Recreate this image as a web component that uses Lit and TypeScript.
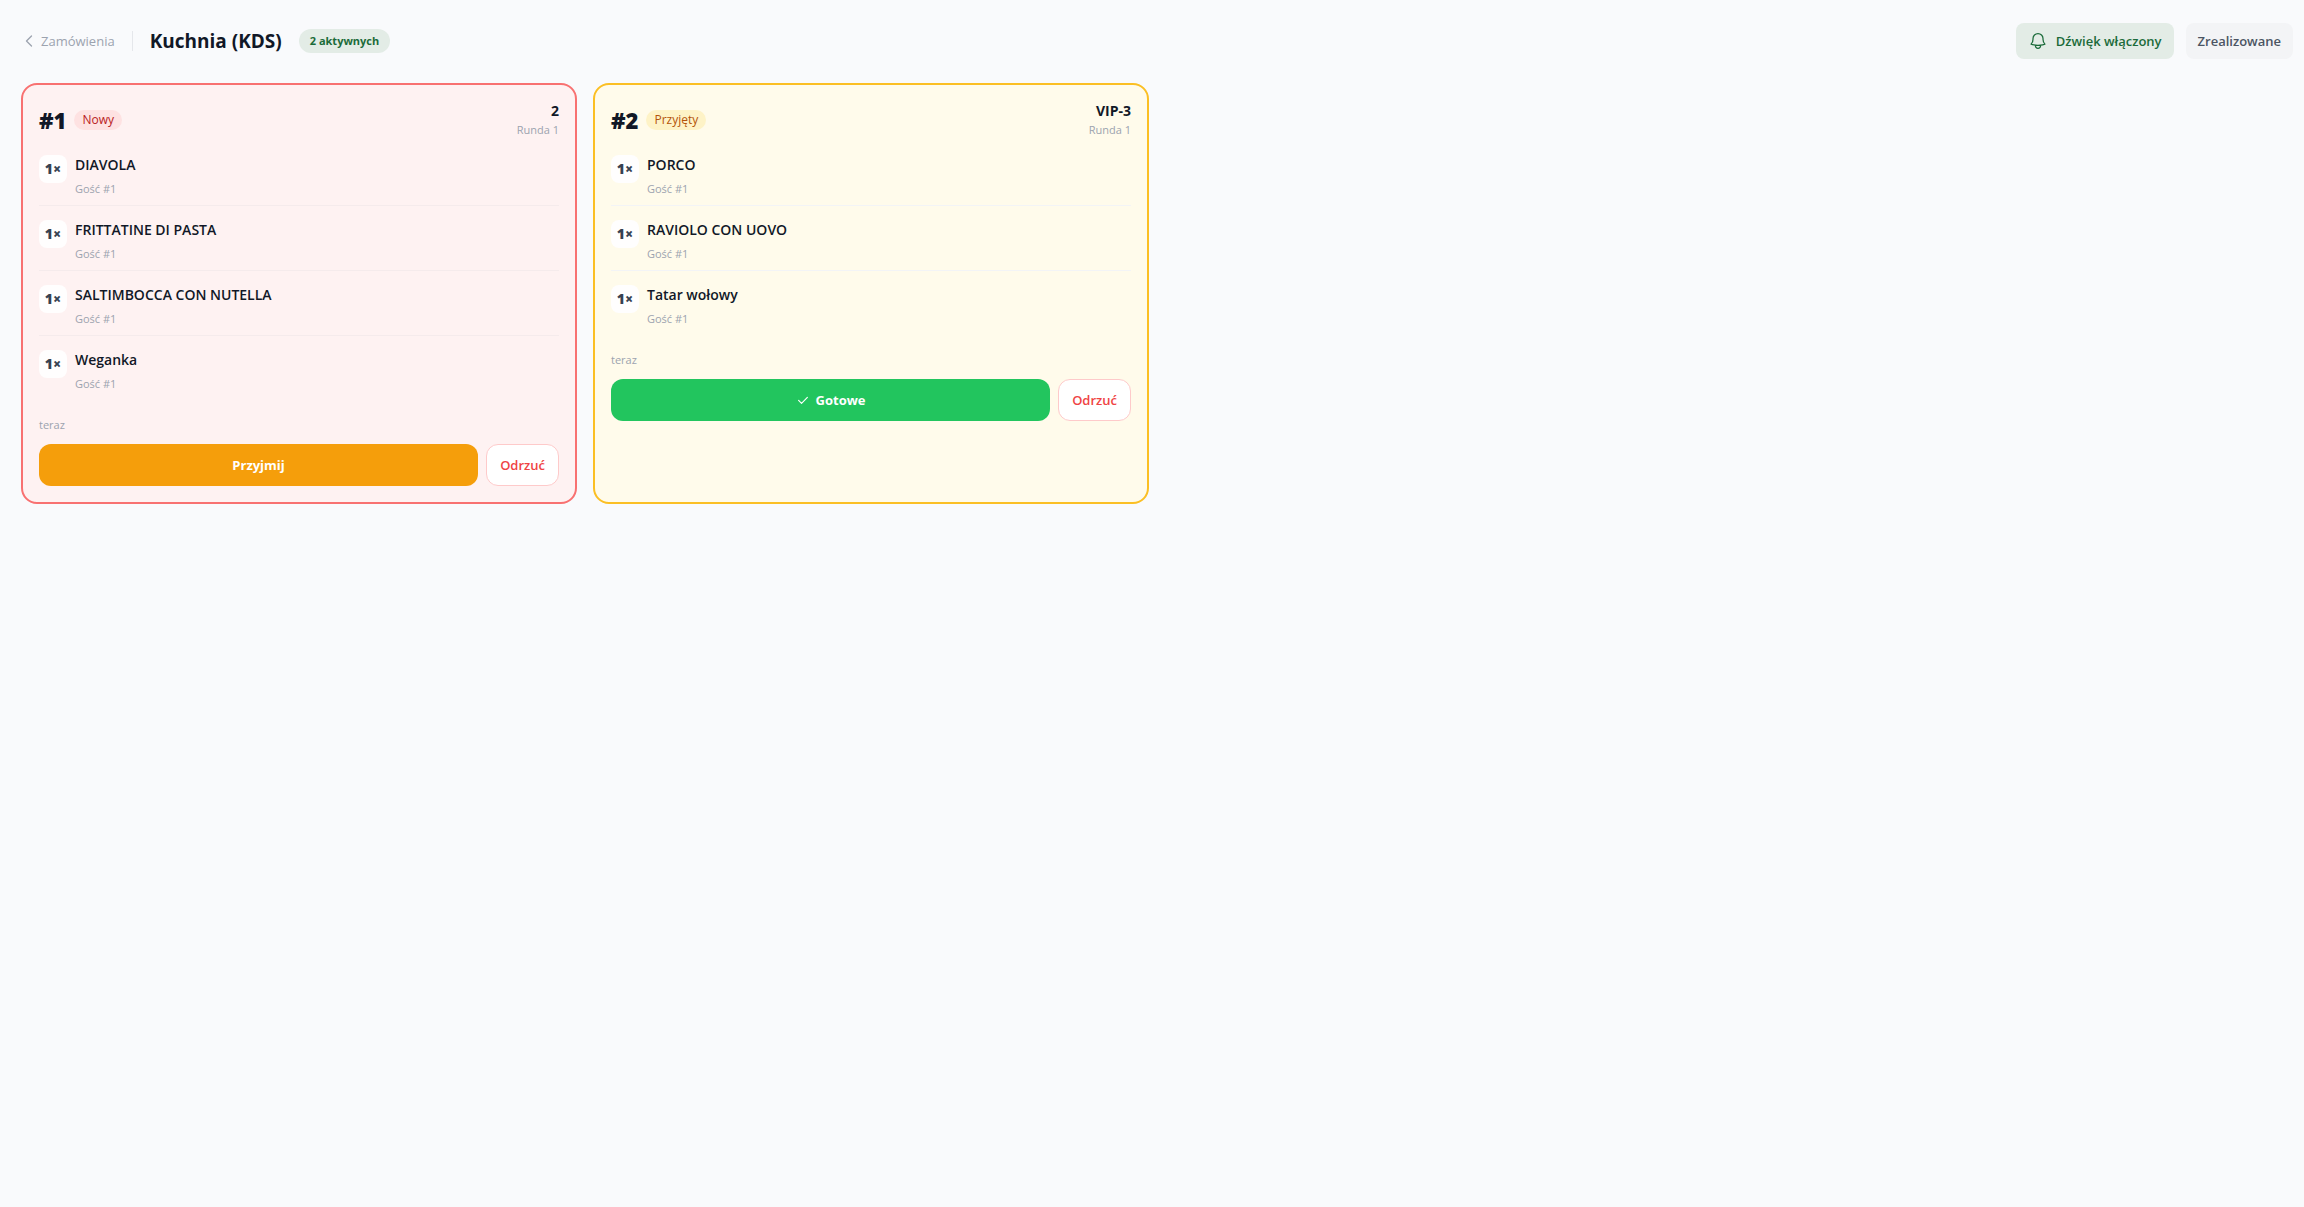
import { LitElement, html, css, svg, nothing } from "lit";
import { customElement, property } from "lit/decorators.js";
import { classMap } from "lit/directives/class-map.js";

type Status = "new" | "accepted";

interface OrderItem {
  qty: number;
  name: string;
  guest: string;
}

interface Order {
  id: number;
  status: Status;
  table: string;
  round: number;
  age: string;
  items: OrderItem[];
}

const guest = "Gość #1";

const orders: Order[] = [
  {
    id: 1,
    status: "new",
    table: "2",
    round: 1,
    age: "teraz",
    items: [
      { qty: 1, name: "DIAVOLA", guest },
      { qty: 1, name: "FRITTATINE DI PASTA", guest },
      { qty: 1, name: "SALTIMBOCCA CON NUTELLA", guest },
      { qty: 1, name: "Weganka", guest },
    ],
  },
  {
    id: 2,
    status: "accepted",
    table: "VIP-3",
    round: 1,
    age: "teraz",
    items: [
      { qty: 1, name: "PORCO", guest },
      { qty: 1, name: "RAVIOLO CON UOVO", guest },
      { qty: 1, name: "Tatar wołowy", guest },
    ],
  },
];

const labels: Record<Status, string> = { new: "Nowy", accepted: "Przyjęty" };

const icon = (name: string, width: string, shape: unknown) => html`<svg
  class=${"icon " + name}
  viewBox="0 0 24 24"
  fill="none"
  stroke="currentColor"
  stroke-width=${width}
  stroke-linecap="round"
  stroke-linejoin="round"
  aria-hidden="true"
>
  ${shape}
</svg>`;

const chevronLeft = icon("chevron", "2", svg`<path d="M15.75 19.5 8.25 12l7.5-7.5" />`);
const bell = icon(
  "bell",
  "1.5",
  svg`<path d="M14.857 17.082a23.848 23.848 0 0 0 5.454-1.31A8.967 8.967 0 0 1 18 9.75V9A6 6 0 0 0 6 9v.75a8.967 8.967 0 0 1-2.312 6.022c1.733.64 3.56 1.085 5.455 1.31m5.714 0a24.255 24.255 0 0 1-5.714 0m5.714 0a3 3 0 1 1-5.714 0" />`
);
const check = icon("check", "2", svg`<path d="m4.5 12.75 5 5L19.5 7.5" />`);

const shared = css`
  *,
  *::before,
  *::after {
    box-sizing: border-box;
  }
  h1,
  h2,
  p,
  ul {
    margin: 0;
    padding: 0;
  }
  button {
    font: inherit;
    cursor: pointer;
  }
  .icon {
    flex: none;
    width: 16px;
    height: 16px;
  }
`;

@customElement("order-card")
export class OrderCard extends LitElement {
  @property({ attribute: false }) order!: Order;

  static styles = [
    shared,
    css`
      :host {
        display: block;
      }
      .card {
        height: 100%;
        padding: 16px;
        border: 2px solid;
        border-radius: 16px;
      }
      .new {
        background: #fef2f2;
        border-color: #f87171;
      }
      .accepted {
        background: #fffbeb;
        border-color: #fbbf24;
      }
      .head {
        display: flex;
        align-items: center;
        justify-content: space-between;
        margin-bottom: 3px;
      }
      .ident {
        display: flex;
        align-items: center;
        gap: 8px;
      }
      .number {
        font-size: 22px;
        line-height: 32px;
        font-weight: 800;
      }
      .status {
        padding: 2px 8px;
        border-radius: 10px;
        font-size: 12px;
        line-height: 16px;
        font-weight: 500;
      }
      .new .status {
        background: #fee2e2;
        color: #b91c1c;
      }
      .accepted .status {
        background: #fef3c7;
        color: #b45309;
      }
      .place {
        display: grid;
        gap: 1px;
        text-align: right;
      }
      .table {
        font-size: 14px;
        line-height: 20px;
        font-weight: 700;
      }
      .muted {
        color: #9ca3af;
        font-size: 11px;
        line-height: 16px;
      }
      .items {
        list-style: none;
      }
      .item {
        display: flex;
        align-items: flex-start;
        gap: 8px;
        padding: 12px 0 8px;
      }
      .item + .item {
        border-top: 1px solid #f3f4f6;
      }
      .new .item + .item {
        border-top-color: #f5ebec;
      }
      .qty {
        flex: none;
        width: 28px;
        margin-top: 2px;
        border-radius: 8px;
        background: #fffefe;
        color: #374151;
        font-size: 14px;
        line-height: 28px;
        font-weight: 800;
        text-align: center;
      }
      .name {
        font-size: 14px;
        line-height: 24px;
        font-weight: 600;
        margin-bottom: 4px;
      }
      .age {
        margin: 17px 0 11px;
      }
      .actions {
        display: flex;
        gap: 8px;
      }
      .btn {
        display: flex;
        align-items: center;
        justify-content: center;
        gap: 6px;
        height: 42px;
        padding: 0 13px;
        border: 0;
        border-radius: 12px;
        font-size: 13px;
        line-height: 20px;
        font-weight: 600;
      }
      .primary {
        flex: 1;
        color: #fff;
        background: #f59e0b;
        font-weight: 700;
      }
      .accepted .primary {
        background: #22c55e;
      }
      .reject {
        flex: none;
        color: #ef4444;
        background: #fff;
        border: 1px solid #fecaca;
      }
      .check {
        width: 14px;
        height: 14px;
      }
    `,
  ];

  render() {
    const o = this.order;
    const isNew = o.status === "new";
    return html`
      <article class=${classMap({ card: true, [o.status]: true })}>
        <div class="head">
          <div class="ident">
            <h2 class="number">#${o.id}</h2>
            <span class="status">${labels[o.status]}</span>
          </div>
          <div class="place">
            <p class="table">${o.table}</p>
            <p class="muted">Runda ${o.round}</p>
          </div>
        </div>
        <ul class="items">
          ${o.items.map(
            (i) => html`<li class="item">
              <span class="qty">${i.qty}×</span>
              <div>
                <p class="name">${i.name}</p>
                <p class="muted">${i.guest}</p>
              </div>
            </li>`
          )}
        </ul>
        <p class="muted age">${o.age}</p>
        <div class="actions">
          <button class="btn primary" type="button">
            ${isNew ? nothing : check}${isNew ? "Przyjmij" : "Gotowe"}
          </button>
          <button class="btn reject" type="button">Odrzuć</button>
        </div>
      </article>
    `;
  }
}

@customElement("app-root")
export class AppRoot extends LitElement {
  static styles = [
    shared,
    css`
      :host {
        display: block;
        min-height: 100vh;
        background: #f9fafc;
        color: #111827;
        font-family: "Segoe UI", "Open Sans", "Noto Sans", sans-serif;
        font-size: 13px;
        line-height: 20px;
      }
      .page {
        padding: 23px 11px 24px 21px;
      }
      .bar {
        display: flex;
        align-items: center;
        justify-content: space-between;
        margin-bottom: 24px;
      }
      .group {
        display: flex;
        align-items: center;
        gap: 17px;
      }
      .tools {
        gap: 12px;
      }
      .back {
        display: flex;
        align-items: center;
        gap: 4px;
        color: #9ca3af;
        text-decoration: none;
      }
      .rule {
        width: 1px;
        height: 20px;
        background: #e5e7eb;
      }
      .title {
        font-size: 19px;
        line-height: 28px;
        font-weight: 700;
      }
      .count {
        padding: 4px 11px;
        border-radius: 12px;
        background: #e3ece6;
        color: #1b6b3a;
        font-size: 11px;
        line-height: 16px;
        font-weight: 700;
      }
      .tool {
        display: flex;
        align-items: center;
        gap: 8px;
        padding: 8px 12px;
        border: 0;
        border-radius: 8px;
        background: #f3f4f6;
        color: #4b5563;
        font-weight: 600;
      }
      .sound {
        background: #e3ece6;
        color: #1b6b3a;
      }
      .bell {
        width: 20px;
        height: 20px;
      }
      .board {
        display: grid;
        grid-template-columns: repeat(4, minmax(0, 1fr));
        gap: 16px;
      }
      @media (max-width: 1279px) {
        .board {
          grid-template-columns: repeat(auto-fill, minmax(280px, 1fr));
        }
      }
    `,
  ];

  render() {
    return html`
      <main class="page">
        <header class="bar">
          <div class="group">
            <a class="back" href="#orders">${chevronLeft}Zamówienia</a>
            <span class="rule"></span>
            <h1 class="title">Kuchnia (KDS)</h1>
            <span class="count">${orders.length} aktywnych</span>
          </div>
          <div class="group tools">
            <button class="tool sound" type="button">${bell}Dźwięk włączony</button>
            <button class="tool" type="button">Zrealizowane</button>
          </div>
        </header>
        <section class="board">
          ${orders.map((o) => html`<order-card .order=${o}></order-card>`)}
        </section>
      </main>
    `;
  }
}
